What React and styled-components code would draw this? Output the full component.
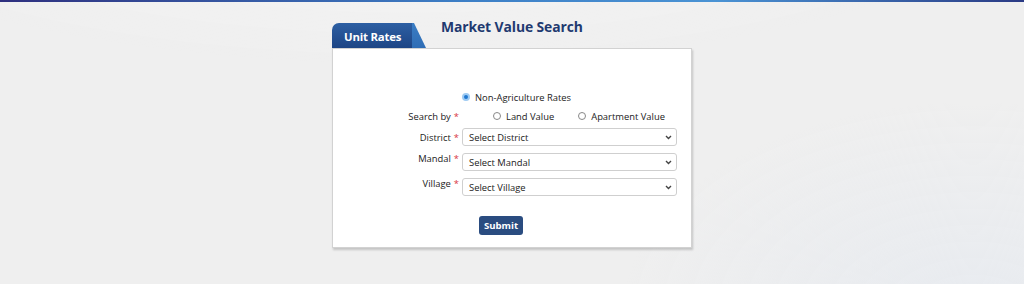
import React from 'react';
import styled, { createGlobalStyle } from 'styled-components';

const GlobalStyle = createGlobalStyle`
  html, body {
    margin: 0;
    padding: 0;
  }
  body {
    font-family: 'Open Sans', 'Noto Sans', Arial, sans-serif;
    background: #efefef;
  }
`;

const Page = styled.div`
  position: relative;
  width: 1024px;
  height: 284px;
  overflow: hidden;
  border-top: 2px solid #2f3a86;
  border-image: linear-gradient(90deg, #2e2f7e, #3d7fc6 45%, #4a93d4 70%, #2a3a84) 1;
  box-sizing: border-box;
  background:
    radial-gradient(ellipse 900px 260px at 40% -120px, rgba(255, 255, 255, 0.55), transparent 70%),
    radial-gradient(ellipse 500px 300px at 95% 110%, rgba(230, 234, 240, 0.8), transparent 70%),
    #efefef;
`;

const Wrapper = styled.div`
  width: 360px;
  margin: 21px auto 0;
`;

const Header = styled.div`
  display: flex;
  align-items: flex-start;
  height: 25px;
`;

const Tab = styled.div`
  position: relative;
  display: flex;
  align-items: center;
  width: 80px;
  height: 25px;
  padding: 2px 0 0 12px;
  box-sizing: border-box;
  border-radius: 7px 0 0 0;
  background: linear-gradient(180deg, #2d5fa3, #1d4585);
  color: #fff;
  font-weight: 700;
  font-size: 11.4px;
  letter-spacing: -0.2px;

  &::after {
    content: '';
    position: absolute;
    left: 80px;
    top: 0;
    width: 14px;
    height: 25px;
    background: linear-gradient(180deg, #3a7dc4, #2f6db5);
    clip-path: polygon(0 0, 2px 0, 100% 100%, 0 100%);
  }
`;

const Title = styled.h1`
  margin: -6px 0 0 29px;
  font-size: 13.9px;
  font-weight: 700;
  color: #1f3a70;
  letter-spacing: -0.1px;
`;

const Panel = styled.div`
  background: #fff;
  border: 1px solid #d2d2d2;
  box-shadow: 1px 2px 2px rgba(0, 0, 0, 0.18);
  height: 200px;
  box-sizing: border-box;
  padding-top: 41px;
`;

const Form = styled.div`
  display: grid;
  grid-template-columns: 127px 215px;
  column-gap: 2px;
  align-items: center;
  font-size: 9.4px;
  color: #222;
`;

const Label = styled.div`
  text-align: right;
  padding-right: 1px;
  white-space: nowrap;
`;

const Req = styled.span`
  color: #d9363e;
  margin-left: 3px;
`;

const RadioRow = styled.div`
  display: flex;
  align-items: center;
  height: ${(p) => p.$h || 20}px;
  padding-left: ${(p) => p.$pad || 0}px;
  gap: ${(p) => p.$gap || 0}px;
`;

const RadioItem = styled.label`
  display: flex;
  align-items: center;
  gap: 5px;
  white-space: nowrap;
`;

const Dot = styled.span`
  display: inline-block;
  width: 8px;
  height: 8px;
  border-radius: 50%;
  box-sizing: border-box;
  border: ${(p) => (p.$on ? '2px solid #9fcbf3' : '1px solid #888')};
  background: ${(p) => (p.$on ? '#1f78d1' : '#fff')};
`;

const SelectBox = styled.div`
  display: flex;
  align-items: center;
  justify-content: space-between;
  height: 18px;
  margin: ${(p) => p.$mt || 0}px 0 0;
  padding: 0 4px 0 6px;
  border: 1px solid #cfcfcf;
  border-radius: 3px;
  box-sizing: border-box;
  background: #fff;
  color: #222;
  font-size: 9.4px;
`;

const Actions = styled.div`
  display: flex;
  margin-top: 20px;
  padding-left: 146px;
`;

const SubmitButton = styled.button`
  width: 44px;
  height: 19px;
  padding: 0;
  border: none;
  border-radius: 3px;
  background: #2a4c80;
  color: #fff;
  font-family: inherit;
  font-size: 9.6px;
  font-weight: 700;
`;

const Chevron = () => (
  <svg width="7" height="5" viewBox="0 0 7 5" fill="none">
    <path d="M1 1l2.5 2.5L6 1" stroke="#444" strokeWidth="1.4" />
  </svg>
);

const Select = ({ text, mt }) => (
  <SelectBox $mt={mt}>
    <span>{text}</span>
    <Chevron />
  </SelectBox>
);

const App = () => {
  return (
    <>
      <GlobalStyle />
      <Page>
        <Wrapper>
          <Header>
            <Tab>Unit Rates</Tab>
            <Title>Market Value Search</Title>
          </Header>
          <Panel>
            <Form>
              <div />
              <RadioRow $h={14}>
                <RadioItem>
                  <Dot $on />
                  Non-Agriculture Rates
                </RadioItem>
              </RadioRow>

              <Label>
                Search by<Req>*</Req>
              </Label>
              <RadioRow $h={24} $pad={31} $gap={24}>
                <RadioItem>
                  <Dot />
                  Land Value
                </RadioItem>
                <RadioItem>
                  <Dot />
                  Apartment Value
                </RadioItem>
              </RadioRow>

              <Label>
                District<Req>*</Req>
              </Label>
              <Select text="Select District" />

              <Label>
                Mandal<Req>*</Req>
              </Label>
              <Select text="Select Mandal" mt={7} />

              <Label>
                Village<Req>*</Req>
              </Label>
              <Select text="Select Village" mt={7} />
            </Form>
            <Actions>
              <SubmitButton>Submit</SubmitButton>
            </Actions>
          </Panel>
        </Wrapper>
      </Page>
    </>
  );
};

export default App;
